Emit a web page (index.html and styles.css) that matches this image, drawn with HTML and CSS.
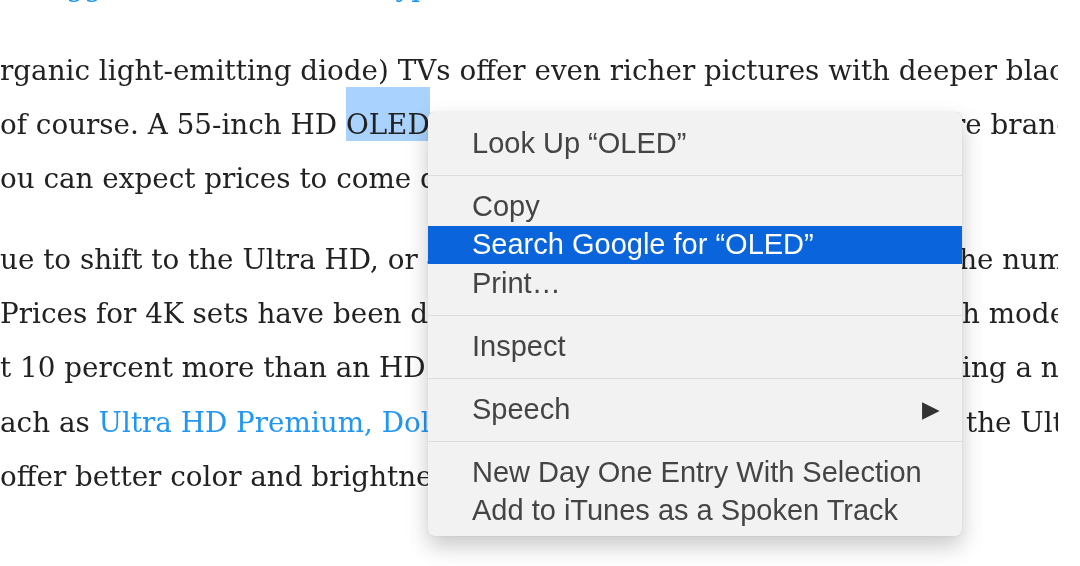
FILE: index.html
```html
<!DOCTYPE html>
<html lang="en">
<head>
  <meta charset="UTF-8" />
  <meta name="viewport" content="width=device-width, initial-scale=1.0"/>
  <title>OLED TVs</title>
  <link rel="stylesheet" href="styles.css">
</head>
<body>
  <div class="page">
    <div class="article">
      <p class="para para-top">
        <span class="line">as <a href="#">bigger</a> screens than the <a href="#">type</a>.</span>
      </p>
      <p class="para">
        <span class="line">rganic light-emitting diode) TVs offer even richer pictures with deeper blacks</span>
        <span class="line split"><span class="head">of course. A 55-inch HD <mark class="sel">OLED</mark> TV costs about $2,000. But with mo</span><span class="tail tail-r">re brands</span></span>
        <span class="line">ou can expect prices to come down over time.</span>
      </p>
      <p class="para">
        <span class="line split"><span class="head">ue to shift to the Ultra HD, or 4K, standard, which quadruples t</span><span class="tail tail-t">the number</span></span>
        <span class="line split"><span class="head">Prices for 4K sets have been declining, and a 55-inc</span><span class="tail">h models</span></span>
        <span class="line split"><span class="head">t 10 percent more than an HD set. Makers are also add</span><span class="tail">ing a new</span></span>
        <span class="line split"><span class="head">ach as <a href="#">Ultra HD Premium, Dolby Vision</a> and HDR10, help</span><span class="tail tail-sp">the Ultra</span></span>
        <span class="line">offer better color and brightness.</span>
      </p>
    </div>

    <div class="menu">
      <div class="item">Look Up “OLED”</div>
      <div class="sep"></div>
      <div class="item">Copy</div>
      <div class="item active">Search Google for “OLED”</div>
      <div class="item">Print…</div>
      <div class="sep"></div>
      <div class="item">Inspect</div>
      <div class="sep"></div>
      <div class="item">Speech <span class="arrow">&#9654;</span></div>
      <div class="sep"></div>
      <div class="item">New Day One Entry With Selection</div>
      <div class="item">Add to iTunes as a Spoken Track</div>
    </div>
  </div>
</body>
</html>
```

FILE: styles.css
```css
body {
  margin: 0;
  padding: 0;
  background: #fff;
  overflow: hidden;
}
.page {
  position: relative;
  width: 1058px;
  height: 566px;
  overflow: hidden;
  filter: blur(0.7px);
}
.article {
  font-family: 'DejaVu Serif', serif;
  font-size: 27.8px;
  color: #222;
  line-height: 54.3px;
}
.para {
  margin: 0 0 26px 0;
}
.para-top {
  margin: -40.5px 0 30px 0;
}
.line {
  display: block;
  white-space: nowrap;
}
.line.split {
  display: grid;
  grid-template-columns: 962px 1fr;
}
.head {
  overflow-x: clip;
}
.tail-r { margin-left: -10px; }
.tail-t { margin-left: -14px; }
.tail-sp { margin-left: 4px; }
.article a {
  color: #2196f3;
  text-decoration: none;
}
.sel {
  background: #a9d3fe;
  color: inherit;
  padding: 21px 0 0;
}
.menu {
  position: absolute;
  left: 428px;
  top: 112px;
  width: 534px;
  padding: 12px 0 6px;
  background: #f2f2f2;
  border-radius: 6px;
  box-shadow: 0 10px 22px rgba(0,0,0,0.22), 0 0 1px rgba(0,0,0,0.25);
  font-family: 'Liberation Sans', sans-serif;
  font-size: 29px;
  color: #444;
}
.item {
  display: flex;
  align-items: center;
  justify-content: space-between;
  height: 38.5px;
  padding: 0 22px 0 44px;
}
.item.active {
  background: #0a64dc;
  color: #fff;
}
.arrow {
  font-size: 23px;
  color: #333;
}
.sep {
  height: 1px;
  margin: 12px 0 11.5px;
  background: #dcdcdc;
}
```
